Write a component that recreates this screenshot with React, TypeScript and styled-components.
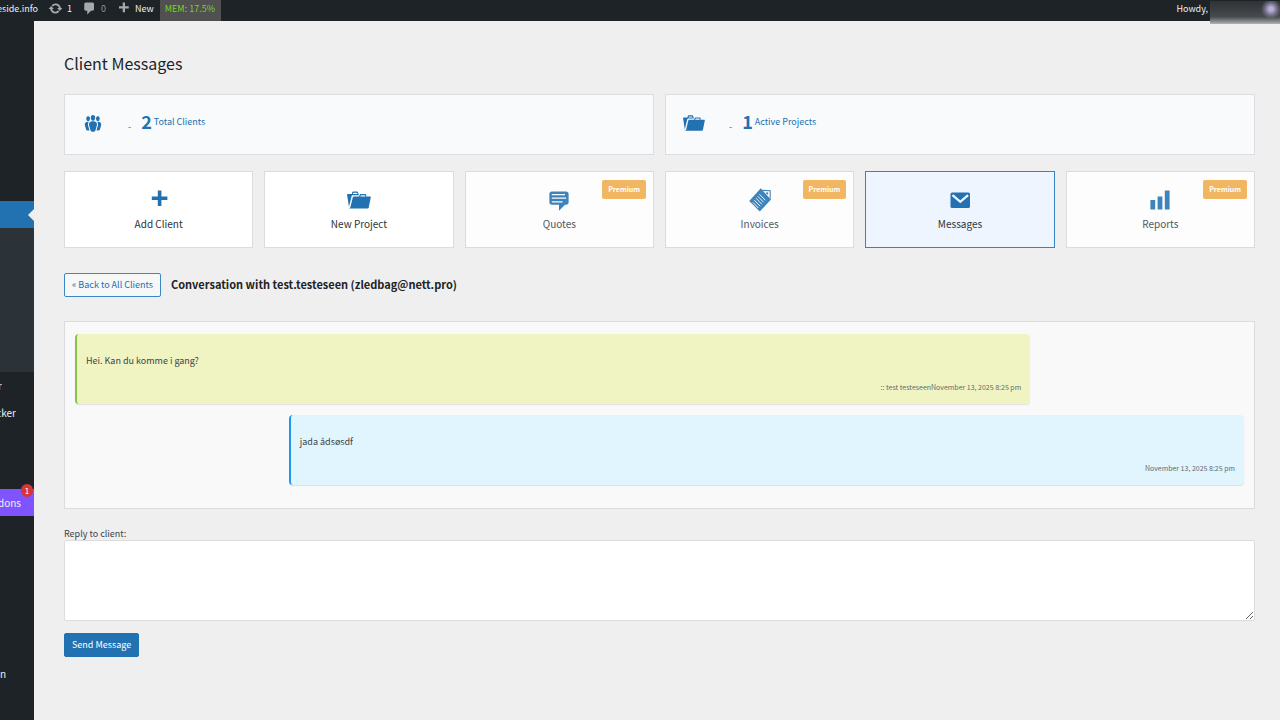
import React from "react";
import styled, { createGlobalStyle, css } from "styled-components";

const FONT = '"Noto Sans CJK SC", "Noto Sans", sans-serif';

const GlobalStyle = createGlobalStyle`
  *, *::before, *::after { box-sizing: border-box; }
  html, body, #root { height: 100%; }
  body {
    margin: 0;
    background: #efefef;
    color: #3c434a;
    font: 9px/14px ${FONT};
  }
  h1, h2, p { margin: 0; }
  button, textarea { font: inherit; }
`;

const Page = styled.div`
  display: flex;
  flex-direction: column;
  min-height: 100%;
`;

/* Admin bar */

const AdminBar = styled.header`
  position: relative;
  display: flex;
  align-items: stretch;
  justify-content: space-between;
  height: 21px;
  background: #1d2327;
  color: #f0f0f1;
  line-height: 18px;
`;

const BarGroup = styled.nav`
  display: flex;
  align-items: stretch;
  gap: 10px;
`;

const BarLink = styled.a<{ $dim?: boolean }>`
  display: flex;
  gap: 4px;
  color: ${(p) => (p.$dim ? "#8f959a" : "#f0f0f1")};
  text-decoration: none;

  svg {
    margin-top: 1px;
    color: #a7aaad;
  }
`;

const SiteLink = styled(BarLink)`
  justify-content: flex-end;
  width: 38px;
  overflow: hidden;
  white-space: nowrap;
`;

const MemoryUsage = styled.span`
  padding: 0 6px 0 5px;
  margin-left: -4px;
  background: #505050;
  color: #74d81b;
`;

const Account = styled.a`
  margin-right: 72px;
  color: #f0f0f1;
  text-decoration: none;
`;

const AccountCover = styled.div`
  position: absolute;
  top: 1px;
  right: 0;
  width: 70px;
  height: 23px;
  background:
    radial-gradient(circle at 61px 8px, #b9b0d6 2px, rgba(150, 142, 176, 0.6) 6px, transparent 10px),
    linear-gradient(#2e3337, #3d4144 10px, #4a4d4f 16px, #a0a1a2 22px, #b8b8b8);
`;

/* Side menu */

const Body = styled.div`
  display: flex;
  flex: 1;
`;

const SideMenu = styled.nav`
  flex: none;
  width: 34px;
  padding-top: 180px;
  background: #1d2327;
`;

const MenuLink = styled.a<{ $inset?: number; $accent?: boolean }>`
  position: relative;
  display: flex;
  align-items: center;
  justify-content: flex-end;
  height: 27px;
  padding-right: ${(p) => p.$inset ?? 0}px;
  background: ${(p) => (p.$accent ? "#7f54ff" : "transparent")};
  color: #f0f0f1;
  font-size: 10px;
  text-decoration: none;
`;

const Clip = styled.span`
  display: flex;
  justify-content: flex-end;
  width: 100%;
  overflow: hidden;
  white-space: nowrap;
`;

const CurrentLink = styled(MenuLink)`
  background: #2271b1;

  &::after {
    content: "";
    position: absolute;
    top: 8px;
    right: 0;
    border: 6px solid transparent;
    border-left: 0;
    border-right-color: #efefef;
  }
`;

const SubMenu = styled.div`
  height: 144px;
  background: #2c3338;
`;

const MenuGap = styled.div<{ $rows?: number }>`
  height: ${(p) => (p.$rows ?? 0) * 27 + 9}px;
`;

const Count = styled.span`
  position: absolute;
  top: -5px;
  right: 1px;
  width: 12px;
  height: 13px;
  border-radius: 7px;
  background: #d63638;
  color: #fff;
  font-size: 8px;
  line-height: 13px;
  text-align: center;
`;

/* Content */

const Main = styled.main`
  flex: 1;
  min-width: 0;
  padding: 31px 25px 32px 30px;
`;

const Title = styled.h1`
  color: #1d2327;
  font-size: 16px;
  font-weight: 400;
  line-height: 22px;
`;

const Stats = styled.div`
  display: grid;
  grid-template-columns: repeat(2, 1fr);
  gap: 11px;
  margin-top: 20px;
`;

const StatCard = styled.section`
  display: flex;
  align-items: center;
  height: 61px;
  padding: 0 17px;
  border: 1px solid #dcdce2;
  background: #f8fafc;
  color: #2271b1;

  svg { margin-top: -4px; }
`;

const StatDash = styled.span`
  margin: 4px 10px 0 24px;
  color: #2271b1;
`;

const StatNumber = styled.strong`
  margin: -8px 2px 0 0;
  font-size: 18px;
  font-weight: 600;
  line-height: 24px;
`;

const StatLabel = styled.span`
  margin-top: -5px;
`;

const Actions = styled.nav`
  display: grid;
  grid-template-columns: repeat(6, 1fr);
  gap: 11px;
  margin-top: 16px;
`;

const ActionCard = styled.a<{ $active?: boolean }>`
  position: relative;
  display: flex;
  flex-direction: column;
  align-items: center;
  height: 77px;
  padding-top: 16px;
  border: 1px solid ${(p) => (p.$active ? "#3582c4" : "#dcdcde")};
  background: ${(p) => (p.$active ? "#eff5ff" : "#fff")};
  color: #2c3338;
  font-size: 10px;
  text-decoration: none;

  svg { color: #2271b1; }
`;

const PremiumCard = styled(ActionCard)`
  background: #fdfdfd;
  color: #50575e;

  svg { color: #3d84bd; }
`;

const ActionLabel = styled.span`
  margin-top: 5px;
`;

const Badge = styled.span`
  position: absolute;
  top: 8px;
  right: 7px;
  padding: 0 6px;
  border-radius: 2px;
  background: #f0b661;
  color: #fff;
  font-size: 7px;
  font-weight: 700;
  line-height: 19px;
`;

const ThreadHeader = styled.div`
  display: flex;
  align-items: center;
  gap: 10px;
  margin-top: 25px;
`;

const buttonShape = css`
  display: inline-flex;
  align-items: center;
  height: 24px;
  padding: 0 7px;
  border: 1px solid #2271b1;
  border-radius: 2px;
`;

const BackLink = styled.a`
  ${buttonShape}
  border-color: #3a87c7;
  background: #f6f7f7;
  color: #2271b1;
  text-decoration: none;
`;

const SendButton = styled.button`
  ${buttonShape}
  margin-top: 12px;
  background: #2271b1;
  color: #fff;
  cursor: pointer;
`;

const ThreadTitle = styled.h2`
  padding-bottom: 2px;
  color: #1d2327;
  font-size: 11px;
  font-weight: 700;
  line-height: 20px;
`;

const Thread = styled.section`
  display: flex;
  flex-direction: column;
  gap: 11px;
  height: 188px;
  margin-top: 24px;
  padding: 12px 10px;
  border: 1px solid #dcdcde;
  background: #f9f9f9;
`;

const Message = styled.article<{ $own?: boolean }>`
  box-sizing: content-box;
  align-self: ${(p) => (p.$own ? "flex-end" : "flex-start")};
  width: 80%;
  padding: 20px 9px 10px;
  border-left: 2px solid ${(p) => (p.$own ? "#2196f3" : "#8bc34a")};
  border-radius: 4px;
  background: ${(p) => (p.$own ? "#e1f5fe" : "#f0f4c3")};
  box-shadow: 0 1px 1px rgba(0, 0, 0, 0.1);
`;

const MessageMeta = styled.p`
  margin-top: 12px;
  color: #646970;
  font-size: 7px;
  text-align: right;
`;

const ReplyForm = styled.form`
  margin-top: 18px;
`;

const ReplyLabel = styled.label`
  display: block;
  line-height: 13px;
`;

const ReplyBox = styled.textarea`
  display: block;
  width: 100%;
  height: 81px;
  padding: 4px 6px;
  border: 1px solid #dcdcde;
  border-radius: 2px;
  background: #fff;
  resize: vertical;
`;

/* Icons, drawn on a 20 unit grid */

const PATHS: Record<string, string> = {
  update:
    "M10.2 3.28c3.53 0 6.43 2.61 6.92 6h2.08l-3.5 4-3.5-4h2.32c-.45-1.97-2.21-3.45-4.32-3.45-1.45 0-2.73.71-3.54 1.78L4.95 5.66C6.23 4.2 8.11 3.28 10.2 3.28zm-.4 13.44c-3.52 0-6.43-2.61-6.92-6H.8l3.5-4c1.17 1.33 2.33 2.67 3.5 4H5.48c.45 1.97 2.21 3.45 4.32 3.45 1.45 0 2.73-.71 3.54-1.78l1.71 1.95c-1.28 1.46-3.15 2.38-5.25 2.38z",
  comment:
    "M5 2h9q.82 0 1.41.59T16 4v7q0 .82-.59 1.41T14 13h-2l-5 5v-5H5q-.82 0-1.41-.59T3 11V4q0-.82.59-1.41T5 2z",
  plus: "M17 7v3h-5v5H9v-5H4V7h5V2h3v5h5z",
  groups:
    "M8.03 4.46c-.29 1.28.55 3.46 1.97 3.46 1.41 0 2.25-2.18 1.96-3.46-.22-.98-1.08-1.63-1.96-1.63-.89 0-1.74.65-1.97 1.63zm-4.13.9c-.25 1.08.47 2.93 1.67 2.93s1.92-1.85 1.67-2.93c-.19-.83-.92-1.39-1.67-1.39s-1.48.56-1.67 1.39zm8.86 0c-.25 1.08.47 2.93 1.66 2.93 1.2 0 1.92-1.85 1.67-2.93-.19-.83-.92-1.39-1.67-1.39-.74 0-1.47.56-1.66 1.39zm-.59 11.43l1.25-4.3C14.2 10 12.71 8.47 10 8.47c-2.72 0-4.21 1.53-3.44 4.02l1.26 4.3C8.05 17.51 9 18 10 18c.98 0 1.94-.49 2.17-1.21zm-6.1-7.63c-.49.67-.96 1.83-.42 3.59l1.12 3.79c-.34.2-.77.31-1.2.31-.85 0-1.65-.41-1.85-1.03l-1.07-3.65c-.65-2.11.61-3.4 2.92-3.4.27 0 .54.02.79.06-.1.1-.2.22-.29.33zm8.35-.39c2.31 0 3.58 1.29 2.92 3.4l-1.07 3.65c-.2.62-1 1.03-1.85 1.03-.43 0-.86-.11-1.2-.31l1.11-3.77c.55-1.78.08-2.94-.42-3.61-.08-.11-.18-.23-.28-.33.25-.04.51-.06.79-.06z",
  portfolio:
    "M4 5H.78c-.37 0-.74.32-.69.84l1.56 9.99S3.5 8.47 3.86 6.7c.11-.53.61-.7.98-.7H10s-.7-2.08-.77-2.31C9.11 3.25 8.89 3 8.45 3H5.14c-.36 0-.7.23-.8.64C4.25 4.04 4 5 4 5zm4.88 0h-4s.42-1 .87-1h2.13c.48 0 1 1 1 1zM2.67 16.25c-.31.47-.76.75-1.26.75h15.73c.54 0 .92-.31 1.03-.83.44-2.19 1.68-8.44 1.68-8.44.07-.5-.3-.73-.62-.73H16V5.53c0-.16-.26-.53-.66-.53h-3.76c-.52 0-.87.58-.87.58L10 7H5.59c-.32 0-.63.19-.69.5 0 0-1.59 6.7-1.72 7.33-.07.37-.22.99-.51 1.42zM15.38 7H11s.58-1 1.13-1h2.29c.71 0 .96 1 .96 1z",
  quote:
    "M4 3h12c.55 0 1.02.2 1.41.59S18 4.45 18 5v7c0 .55-.2 1.02-.59 1.41S16.55 14 16 14h-1l-5 5v-5H4c-.55 0-1.02-.2-1.41-.59S2 12.55 2 12V5c0-.55.2-1.02.59-1.41S3.45 3 4 3zm11 2H4v1h11V5zm1 3H4v1h12V8zm-3 3H4v1h9v-1z",
  chart: "M18 18V2h-4v16h4zm-6 0V7H8v11h4zm-6 0v-8H2v8h4z",
};

function Icon({ name, size }: { name: string; size: number }) {
  return (
    <svg width={size} height={size} viewBox="0 0 20 20" fill="currentColor" aria-hidden="true">
      <path d={PATHS[name]} />
    </svg>
  );
}

function MailIcon() {
  return (
    <svg width="24" height="24" viewBox="0 0 24 24" aria-hidden="true">
      <rect x="2.5" y="4.5" width="19.5" height="15.5" rx="1.6" fill="currentColor" />
      <path d="M4.5 7.2l7.8 6.6 7.8-6.6" fill="none" stroke="#eff5ff" strokeWidth="2.4" />
    </svg>
  );
}

function InvoiceIcon() {
  return (
    <svg width="24" height="24" viewBox="0 0 24 24" fill="none" stroke="currentColor" aria-hidden="true">
      <path d="M12.8 .2L23 11.4 11.8 23.6 1.2 13z" fill="currentColor" stroke="none" />
      <path d="M14.8 2.4l7.4.4v7.8" fill="#fdfdfd" strokeWidth="1.1" />
      <circle cx="19.2" cy="5.4" r="1.1" fill="currentColor" stroke="none" />
      <path
        d="M11.4 6.2l5.9 6.1M9.7 8.2l5.9 6.1M8 10.2l5.9 6.1M6.3 12.2l5.9 6.1M4.9 14.4l5.4 5.6"
        stroke="#fdfdfd"
        strokeWidth="0.9"
      />
    </svg>
  );
}

function Stat({ icon, value, label }: { icon: string; value: number; label: string }) {
  return (
    <StatCard>
      <Icon name={icon} size={22} />
      <StatDash>-</StatDash>
      <StatNumber>{value}</StatNumber>
      <StatLabel>{label}</StatLabel>
    </StatCard>
  );
}

export default function App() {
  return (
    <Page>
      <GlobalStyle />
      <AdminBar>
        <BarGroup>
          <SiteLink href="#site">eside.info</SiteLink>
          <BarLink href="#updates"><Icon name="update" size={15} />1</BarLink>
          <BarLink href="#comments" $dim><Icon name="comment" size={15} />0</BarLink>
          <BarLink href="#new"><Icon name="plus" size={15} />New</BarLink>
          <MemoryUsage>MEM: 17.5%</MemoryUsage>
        </BarGroup>
        <Account href="#profile">Howdy,</Account>
        <AccountCover />
      </AdminBar>

      <Body>
        <SideMenu>
          <CurrentLink href="#client-messages" aria-label="Client Messages" />
          <SubMenu />
          <MenuLink href="#menu" $inset={32}><Clip>r</Clip></MenuLink>
          <MenuLink href="#tracker" $inset={18}><Clip>cker</Clip></MenuLink>
          <MenuGap $rows={2} />
          <MenuLink href="#addons" $inset={13} $accent>
            <Clip>dons</Clip>
            <Count>1</Count>
          </MenuLink>
          <MenuGap $rows={5} />
          <MenuLink href="#more" $inset={28}><Clip>n</Clip></MenuLink>
        </SideMenu>

        <Main>
          <Title>Client Messages</Title>

          <Stats>
            <Stat icon="groups" value={2} label="Total Clients" />
            <Stat icon="portfolio" value={1} label="Active Projects" />
          </Stats>

          <Actions>
            <ActionCard href="#add-client">
              <Icon name="plus" size={24} />
              <ActionLabel>Add Client</ActionLabel>
            </ActionCard>
            <ActionCard href="#new-project">
              <Icon name="portfolio" size={24} />
              <ActionLabel>New Project</ActionLabel>
            </ActionCard>
            <PremiumCard href="#quotes">
              <Icon name="quote" size={24} />
              <ActionLabel>Quotes</ActionLabel>
              <Badge>Premium</Badge>
            </PremiumCard>
            <PremiumCard href="#invoices">
              <InvoiceIcon />
              <ActionLabel>Invoices</ActionLabel>
              <Badge>Premium</Badge>
            </PremiumCard>
            <ActionCard href="#messages" $active>
              <MailIcon />
              <ActionLabel>Messages</ActionLabel>
            </ActionCard>
            <PremiumCard href="#reports">
              <Icon name="chart" size={24} />
              <ActionLabel>Reports</ActionLabel>
              <Badge>Premium</Badge>
            </PremiumCard>
          </Actions>

          <ThreadHeader>
            <BackLink href="#clients">« Back to All Clients</BackLink>
            <ThreadTitle>Conversation with test.testeseen (zledbag@nett.pro)</ThreadTitle>
          </ThreadHeader>

          <Thread>
            <Message>
              <p>Hei. Kan du komme i gang?</p>
              <MessageMeta>:: test testeseenNovember 13, 2025 8:25 pm</MessageMeta>
            </Message>
            <Message $own>
              <p>jada ådsøsdf</p>
              <MessageMeta>November 13, 2025 8:25 pm</MessageMeta>
            </Message>
          </Thread>

          <ReplyForm onSubmit={(e) => e.preventDefault()}>
            <ReplyLabel htmlFor="reply">Reply to client:</ReplyLabel>
            <ReplyBox id="reply" />
            <SendButton type="submit">Send Message</SendButton>
          </ReplyForm>
        </Main>
      </Body>
    </Page>
  );
}
